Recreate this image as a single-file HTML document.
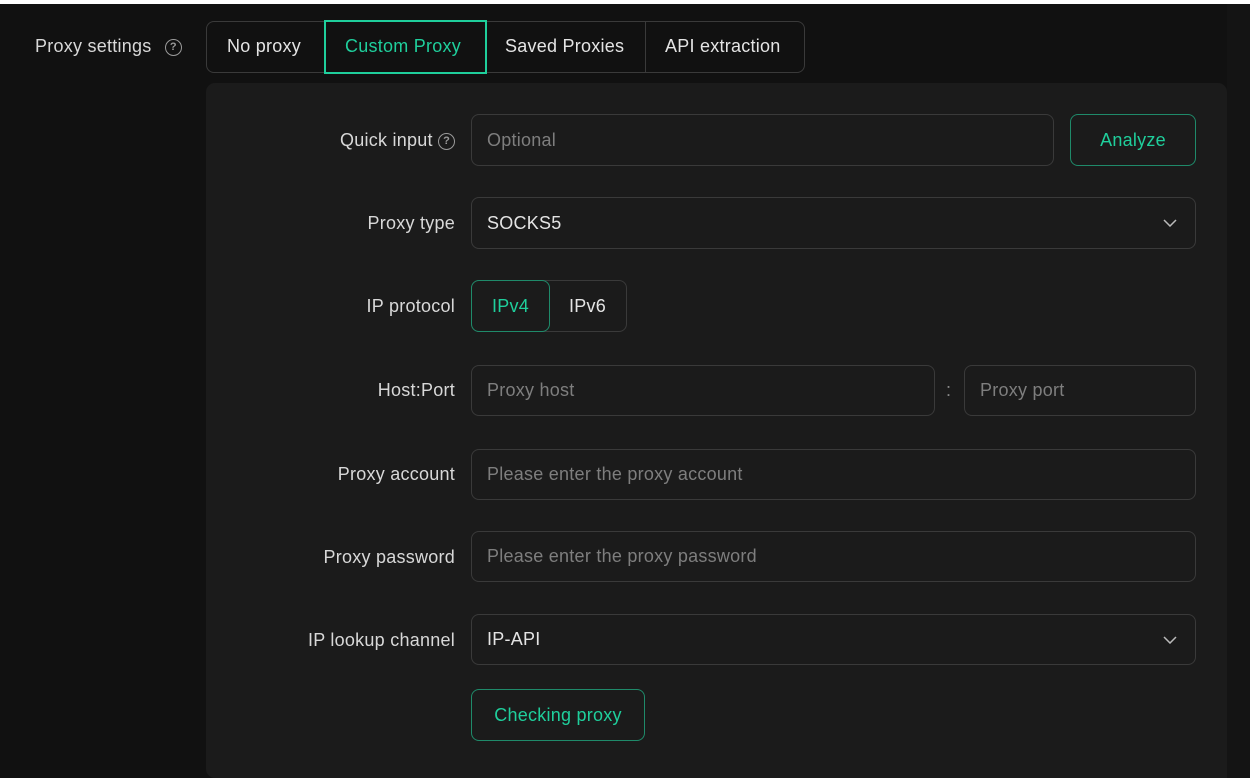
<!DOCTYPE html>
<html><head><meta charset="utf-8"><style>
*{box-sizing:border-box;margin:0;padding:0}
body{width:1250px;height:782px;background:#fff;font-family:"Liberation Sans",sans-serif;position:relative;overflow:hidden;letter-spacing:0.25px}
.bg{position:absolute;left:0;top:4px;width:1250px;height:774px;background:#111}
.abs{position:absolute}
.lbl{position:absolute;color:#d8d8d8;font-size:18px;text-align:right;right:795px;white-space:nowrap}
.inp{position:absolute;border:1px solid #3a3a3a;border-radius:8px;background:#1b1b1b;color:#7e7e7e;font-size:18px;padding-left:15px;display:flex;align-items:center}
.val{color:#e4e4e4}
.q{display:inline-block;width:17px;height:17px;border:1.5px solid #9a9a9a;border-radius:50%;font-size:11px;line-height:14px;text-align:center;color:#9a9a9a;vertical-align:middle;font-weight:bold;letter-spacing:0}
.g{color:#1fcf9c}
.chev{position:absolute;right:18px;top:50%;margin-top:-4px}
</style></head><body>
<div class="bg"></div>
<div class="abs" style="left:1227px;top:4px;width:23px;height:774px;background:#141414"></div>
<div class="abs" style="left:35px;top:36px;color:#d8d8d8;font-size:18px">Proxy settings <span class="q" style="margin-left:8px">?</span></div>
<div class="abs" style="left:206px;top:21px;width:599px;height:52px;border:1px solid #3a3a3a;border-radius:8px;color:#e4e4e4;font-size:18px">
 <div class="abs" style="left:20px;top:14px">No proxy</div>
 <div class="abs" style="left:117px;top:-2px;width:163px;height:54px;border:2px solid #1fcf9c;background:#111"></div>
 <div class="abs g" style="left:138px;top:14px">Custom Proxy</div>
 <div class="abs" style="left:298px;top:14px">Saved Proxies</div>
 <div class="abs" style="left:438px;top:0;width:1px;height:50px;background:#3a3a3a"></div>
 <div class="abs" style="left:458px;top:14px">API extraction</div>
</div>
<div class="abs" style="left:206px;top:83px;width:1021px;height:695px;background:#1b1b1b;border-radius:9px 9px 0 9px"></div>

<div class="lbl" style="top:130px">Quick input <span class="q">?</span></div>
<div class="inp" style="left:471px;top:114px;width:583px;height:52px">Optional</div>
<div class="inp g" style="left:1070px;top:114px;width:126px;height:52px;border-color:#1f8a6a;justify-content:center;padding:0">Analyze</div>

<div class="lbl" style="top:213px">Proxy type</div>
<div class="inp val" style="left:471px;top:197px;width:725px;height:52px">SOCKS5<svg class="chev" width="14" height="8" viewBox="0 0 14 8"><path d="M1 1l6 6 6-6" stroke="#bbb" stroke-width="1.5" fill="none"/></svg></div>

<div class="lbl" style="top:296px">IP protocol</div>
<div class="inp val" style="left:471px;top:280px;width:156px;height:52px;padding:0"></div>
<div class="inp g" style="left:471px;top:280px;width:79px;height:52px;border-color:#1f8a6a;justify-content:center;padding:0">IPv4</div>
<div class="abs val" style="left:569px;top:296px;font-size:18px">IPv6</div>

<div class="lbl" style="top:380px">Host:Port</div>
<div class="inp" style="left:471px;top:365px;width:464px;height:51px">Proxy host</div>
<div class="abs" style="left:946px;top:380px;color:#888;font-size:18px">:</div>
<div class="inp" style="left:964px;top:365px;width:232px;height:51px">Proxy port</div>

<div class="lbl" style="top:464px">Proxy account</div>
<div class="inp" style="left:471px;top:449px;width:725px;height:51px">Please enter the proxy account</div>

<div class="lbl" style="top:547px">Proxy password</div>
<div class="inp" style="left:471px;top:531px;width:725px;height:51px">Please enter the proxy password</div>

<div class="lbl" style="top:630px">IP lookup channel</div>
<div class="inp val" style="left:471px;top:614px;width:725px;height:51px">IP-API<svg class="chev" width="14" height="8" viewBox="0 0 14 8"><path d="M1 1l6 6 6-6" stroke="#bbb" stroke-width="1.5" fill="none"/></svg></div>

<div class="inp g" style="left:471px;top:689px;width:174px;height:52px;border-color:#1f8a6a;justify-content:center;padding:0">Checking proxy</div>
</body></html>
